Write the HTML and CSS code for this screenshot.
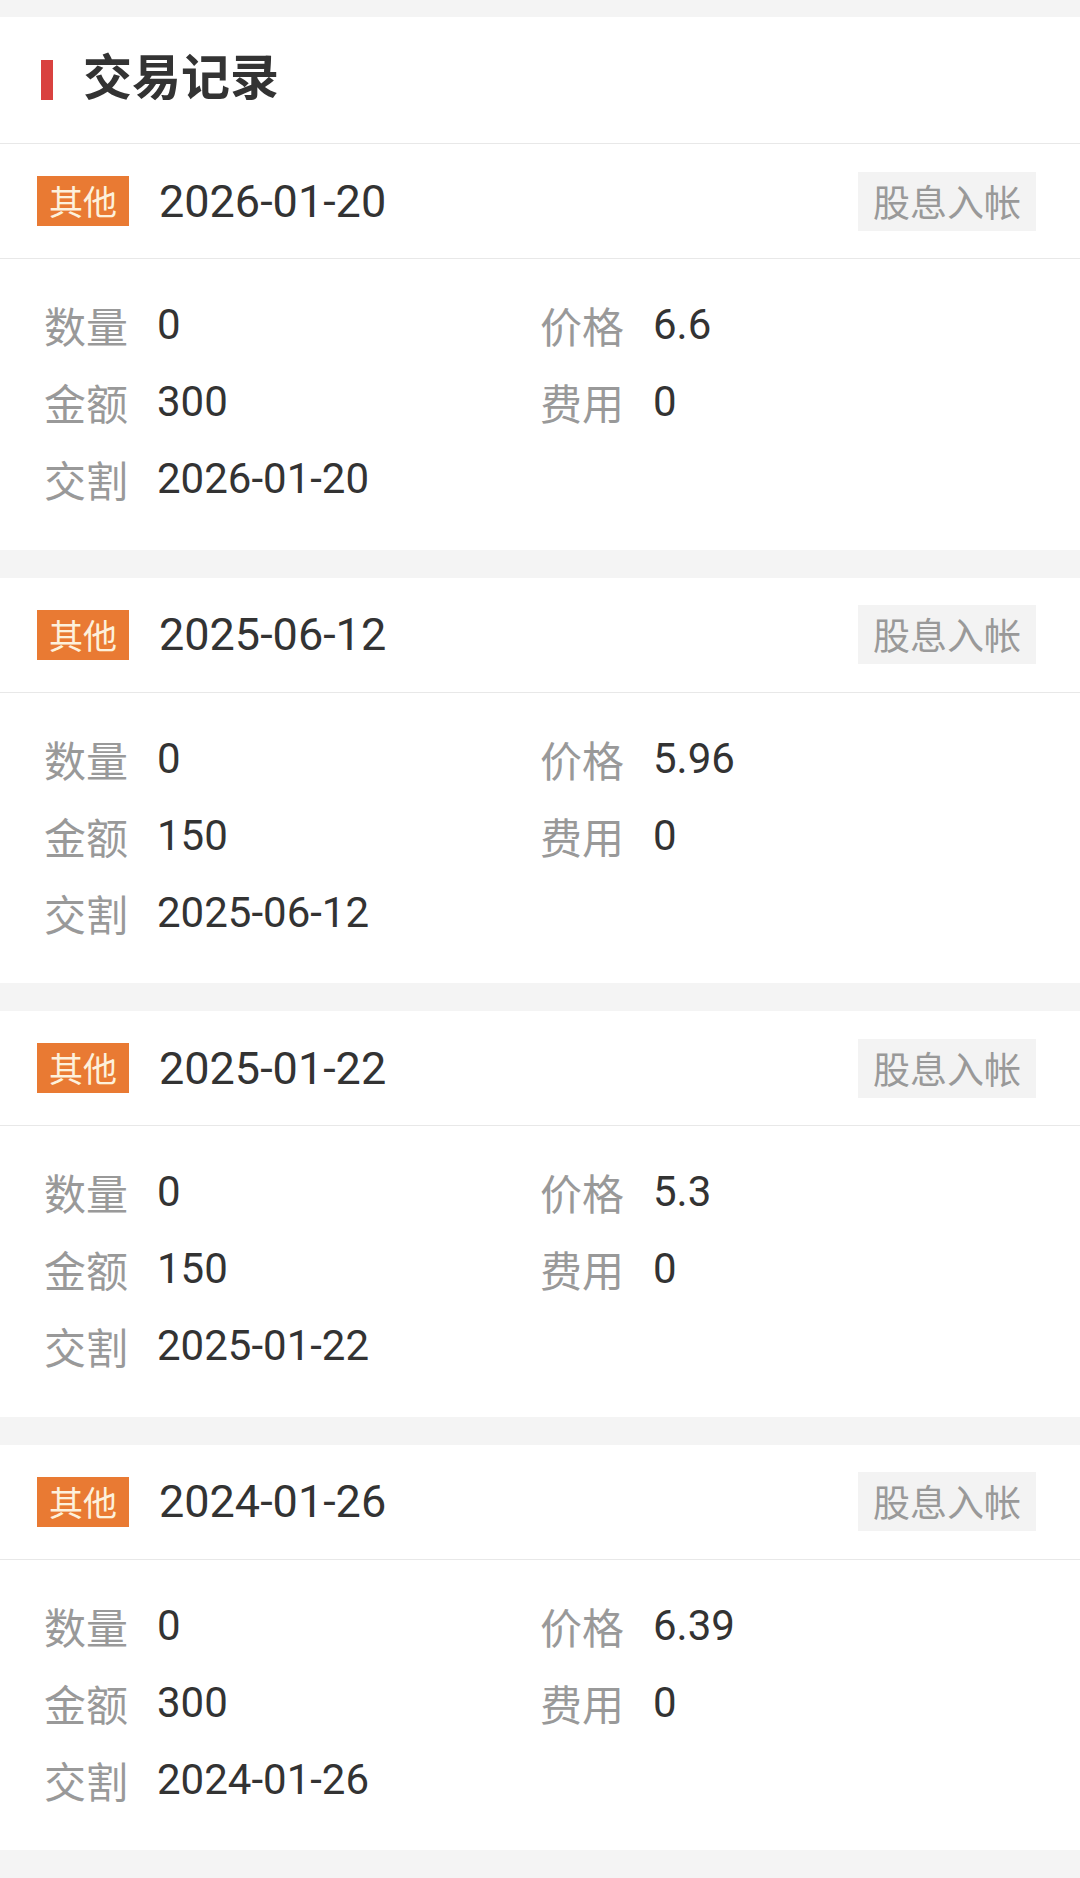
FILE: index.html
```html
<!DOCTYPE html>
<html>
	<head>
		<meta charset="utf-8">
		<title>交易记录</title>
		<link rel="stylesheet" href="styles.css">
	</head>
	<body>
		<div class="page">
			<div class="title-bar">
				<span class="title-mark"></span>
				<h1 class="title">交易记录</h1>
			</div>

			<div class="record">
				<div class="record-head">
					<span class="tag">其他</span>
					<span class="record-date">2026-01-20</span>
					<span class="record-type">股息入帐</span>
				</div>
				<div class="record-body">
					<div class="field"><span class="label">数量</span><span class="value">0</span></div>
					<div class="field"><span class="label">价格</span><span class="value">6.6</span></div>
					<div class="field"><span class="label">金额</span><span class="value">300</span></div>
					<div class="field"><span class="label">费用</span><span class="value">0</span></div>
					<div class="field"><span class="label">交割</span><span class="value">2026-01-20</span></div>
				</div>
			</div>

			<div class="record">
				<div class="record-head">
					<span class="tag">其他</span>
					<span class="record-date">2025-06-12</span>
					<span class="record-type">股息入帐</span>
				</div>
				<div class="record-body">
					<div class="field"><span class="label">数量</span><span class="value">0</span></div>
					<div class="field"><span class="label">价格</span><span class="value">5.96</span></div>
					<div class="field"><span class="label">金额</span><span class="value">150</span></div>
					<div class="field"><span class="label">费用</span><span class="value">0</span></div>
					<div class="field"><span class="label">交割</span><span class="value">2025-06-12</span></div>
				</div>
			</div>

			<div class="record">
				<div class="record-head">
					<span class="tag">其他</span>
					<span class="record-date">2025-01-22</span>
					<span class="record-type">股息入帐</span>
				</div>
				<div class="record-body">
					<div class="field"><span class="label">数量</span><span class="value">0</span></div>
					<div class="field"><span class="label">价格</span><span class="value">5.3</span></div>
					<div class="field"><span class="label">金额</span><span class="value">150</span></div>
					<div class="field"><span class="label">费用</span><span class="value">0</span></div>
					<div class="field"><span class="label">交割</span><span class="value">2025-01-22</span></div>
				</div>
			</div>

			<div class="record">
				<div class="record-head">
					<span class="tag">其他</span>
					<span class="record-date">2024-01-26</span>
					<span class="record-type">股息入帐</span>
				</div>
				<div class="record-body">
					<div class="field"><span class="label">数量</span><span class="value">0</span></div>
					<div class="field"><span class="label">价格</span><span class="value">6.39</span></div>
					<div class="field"><span class="label">金额</span><span class="value">300</span></div>
					<div class="field"><span class="label">费用</span><span class="value">0</span></div>
					<div class="field"><span class="label">交割</span><span class="value">2024-01-26</span></div>
				</div>
			</div>
		</div>
	</body>
</html>
```

FILE: styles.css
```css
html,
body {
	margin:0;
	padding:0;
	background:#f4f4f4;
}
body {
	color:#333;
	font-family:Roboto, "Noto Sans CJK SC", sans-serif;
}
.page {
	padding-top:17px;
	min-height:1861px;
}

/* header */
.title-bar {
	display:flex;
	align-items:center;
	height:126px;
	padding-left:41px;
	background:#fff;
	border-bottom:1px solid #e8e8e8;
}
.title-mark {
	width:12px;
	height:40px;
	background:#d9413f;
	margin-right:30px;
}
.title {
	margin:0 0 14px;
	font-size:49px;
	font-weight:bold;
	color:#333;
	font-family:"Noto Sans CJK SC", sans-serif;
	line-height:1;
}

/* record cards */
.record {
	background:#fff;
	margin-bottom:28px;
}
.record-head {
	display:flex;
	align-items:center;
	height:114px;
	padding:0 44px 0 37px;
	border-bottom:1px solid #e8e8e8;
}
.tag {
	height:50px;
	line-height:50px;
	padding:0 12px;
	background:#e97a33;
	color:#fdf1dc;
	font-size:34px;
	font-family:"Noto Sans CJK SC", sans-serif;
}
.record-date {
	margin-left:30px;
	font-size:45px;
	color:#333;
	flex:1;
}
.record-type {
	height:59px;
	line-height:59px;
	padding:0 15px;
	background:#f3f3f3;
	color:#999;
	font-size:37px;
	font-family:"Noto Sans CJK SC", sans-serif;
}
.record-body {
	display:grid;
	grid-template-columns:1fr 1fr;
	padding:27px 44px 32.5px;
}
.field {
	display:flex;
	align-items:center;
	height:77px;
	font-size:42px;
}
.label {
	color:#999;
	font-family:"Noto Sans CJK SC", sans-serif;
	margin-right:29px;
}
.value {
	color:#333;
}
```
